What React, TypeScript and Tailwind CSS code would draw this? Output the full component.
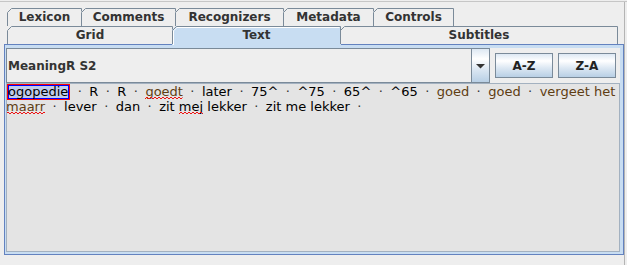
import React, { useId } from "react";

const TAB_BORDER = "#7a8a99";

type TabProps = {
  label: string;
  cls: string;
  w: number;
  h: number;
  selected?: boolean;
  first?: boolean;
  textCls: string;
};

function Tab({ label, cls, w, h, selected, first, textCls }: TabProps) {
  const fill = selected ? "#c8ddf2" : "#eeeeee";
  const sh = selected ? h - 1 : h;
  return (
    <div className={`relative shrink-0 ${first ? "" : "-ml-px"} ${selected ? "z-10" : ""} ${cls}`}>
      <svg className="absolute left-0 top-0" width={w} height={h}>
        <path d={`M0 ${h} V4 L4 0 H${w} V${h} Z`} fill={fill} />
        {selected && (
          <path d={`M1.5 ${h} V4.9 L4.9 1.5 H${w - 1.5}`} fill="none" stroke="#ffffff" />
        )}
        <path
          d={`M0.5 ${sh} V4.5 L4.5 0.5 H${w - 0.5} V${sh}`}
          fill="none"
          stroke={TAB_BORDER}
        />
      </svg>
      <div className={`relative text-center text-[12px] font-bold text-[#333333] ${textCls}`}>
        {label}
      </div>
    </div>
  );
}

function Sep() {
  return <span className="inline-block w-[19px] shrink-0 text-center text-[#333333]">·</span>;
}

const BROWN = "text-[#5e3d12]";

function Squiggle() {
  const id = useId().replace(/:/g, "");
  return (
    <svg className="pointer-events-none absolute left-0 top-[12px] h-[4px] w-full" preserveAspectRatio="none">
      <defs>
        <pattern id={`sq${id}`} width="4" height="4" patternUnits="userSpaceOnUse">
          <polyline points="0,3 2,1 4,3" fill="none" stroke="#ee1111" strokeWidth="1" />
        </pattern>
      </defs>
      <rect x="0" y="0" width="100%" height="4" fill={`url(#sq${id})`} />
    </svg>
  );
}

function Tok({ children, brown, squiggle }: { children: React.ReactNode; brown?: boolean; squiggle?: boolean }) {
  return (
    <span className={`relative shrink-0 ${brown ? BROWN : "text-black"}`}>
      {children}
      {squiggle && <Squiggle />}
    </span>
  );
}

const GRAD =
  "bg-[linear-gradient(to_bottom,#dde8f3_0%,#ffffff_30%,#dde8f3_60%,#b8cfe5_100%)]";

export default function App() {
  return (
    <div className="flex h-[265px] w-[627px] flex-col overflow-hidden bg-[#eeeeee] font-['DejaVu_Sans','Verdana',sans-serif]">
      <div className="h-px shrink-0 bg-[#eeeeee]" />
      <div className="h-px shrink-0 bg-[#c6c6c6]" />
      <div className="flex flex-1">
        <div className="flex w-[624px] shrink-0 flex-col">
          <div className="h-[6px] shrink-0" />
          {/* Tab row 1 */}
          <div className="ml-[7px] flex h-[18px] shrink-0 items-start">
            <Tab first label="Lexicon" cls="w-[75px] h-[18px]" w={75} h={18} textCls="pt-px leading-[17px]" />
            <Tab label="Comments" cls="w-[95px] h-[18px]" w={95} h={18} textCls="pt-px leading-[17px]" />
            <Tab label="Recognizers" cls="w-[109px] h-[18px]" w={109} h={18} textCls="pt-px leading-[17px]" />
            <Tab label="Metadata" cls="w-[91px] h-[18px]" w={91} h={18} textCls="pt-px leading-[17px]" />
            <Tab label="Controls" cls="w-[81px] h-[18px]" w={81} h={18} textCls="pt-px leading-[17px]" />
          </div>
          {/* Tab row 2 */}
          <div className="ml-[7px] flex h-[18px] shrink-0 items-start">
            <Tab first label="Grid" cls="w-[166px] h-[18px]" w={166} h={18} textCls="leading-[18px]" />
            <Tab selected label="Text" cls="w-[169px] h-[19px]" w={169} h={19} textCls="leading-[18px]" />
            <Tab label="Subtitles" cls="w-[278px] h-[18px]" w={278} h={18} textCls="leading-[18px]" />
          </div>
          {/* Content panel */}
          <div className="ml-[4px] flex h-[211px] w-[620px] shrink-0 flex-col border border-[#6382bf] bg-[#c8ddf2] pb-[2px] pl-px pr-[3px] pt-[3px]">
            <div className="flex h-[35px] shrink-0 items-center bg-[#eeeeee]">
              {/* Combobox */}
              <div className="flex h-[35px] w-[484px] shrink-0 border border-[#7a8a99] bg-[#eeeeee]">
                <div className="flex flex-1 items-center pl-px text-[12px] font-bold text-[#333333]">
                  MeaningR S2
                </div>
                <div className={`flex w-[18px] items-center justify-center border-l border-[#7a8a99] ${GRAD}`}>
                  <svg width="9" height="5" className="mt-[2px]" viewBox="0 0 9 5">
                    <polygon points="0,0 9,0 4.5,4.5" fill="#333333" />
                  </svg>
                </div>
              </div>
              <button className={`ml-[5px] flex h-[25px] w-[58px] shrink-0 items-center justify-center border border-[#7a8a99] ${GRAD} text-[12px] font-bold text-[#222222]`}>
                A-Z
              </button>
              <button className={`ml-[5px] flex h-[25px] w-[58px] shrink-0 items-center justify-center border border-[#7a8a99] ${GRAD} text-[12px] font-bold text-[#222222]`}>
                Z-A
              </button>
            </div>
            {/* Text area */}
            <div className="h-[169px] shrink-0 overflow-hidden border border-[#a3b1c0] bg-[#e4e4e4] text-[13px]">
              <div className="flex h-[15px] items-start whitespace-pre leading-[15px]">
                <span className="h-[16px] shrink-0 bg-[#c0cceb] pb-px pl-px pr-[2px] text-black shadow-[inset_0_0_0_1px_#ff0000,inset_0_0_0_2px_#0000ff]">
                  ogopedie
                </span>
                <Sep />
                <Tok>R</Tok>
                <Sep />
                <Tok>R</Tok>
                <Sep />
                <Tok brown squiggle>goedt</Tok>
                <Sep />
                <Tok>later</Tok>
                <Sep />
                <Tok>75^</Tok>
                <Sep />
                <Tok>^75</Tok>
                <Sep />
                <Tok>65^</Tok>
                <Sep />
                <Tok>^65</Tok>
                <Sep />
                <Tok brown>goed</Tok>
                <Sep />
                <Tok brown>goed</Tok>
                <Sep />
                <Tok brown>vergeet het</Tok>
              </div>
              <div className="-ml-px flex h-[15px] items-start whitespace-pre leading-[15px]">
                <Tok brown squiggle>maarr</Tok>
                <Sep />
                <Tok>lever</Tok>
                <Sep />
                <Tok>dan</Tok>
                <Sep />
                <Tok>zit </Tok>
                <Tok squiggle>mej</Tok>
                <Tok> lekker</Tok>
                <Sep />
                <Tok>zit me lekker</Tok>
                <Sep />
              </div>
            </div>
          </div>
        </div>
        <div className="w-px shrink-0 bg-[#b4b4b4]" />
        <div className="flex-1" />
      </div>
    </div>
  );
}
